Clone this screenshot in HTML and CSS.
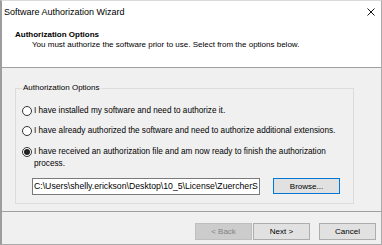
FILE: index.html
```html
<!DOCTYPE html>
<html lang="en">
  <head>
    <meta charset="UTF-8" />
    <title>Software Authorization Wizard</title>
    <link rel="stylesheet" href="styles.css">
  </head>
  <body>
    <div class="window">
      <!-- title bar -->
      <div class="titlebar">
        <span class="title">Software Authorization Wizard</span>
        <svg class="close" width="8" height="8" viewBox="0 0 8 8">
          <path d="M0.5 0.5 L7.5 7.5 M7.5 0.5 L0.5 7.5" stroke="#111" stroke-width="1" fill="none" />
        </svg>
      </div>

      <!-- wizard header -->
      <div class="header">
        <div class="header-title">Authorization Options</div>
        <div class="header-sub">You must authorize the software prior to use. Select from the options below.</div>
      </div>

      <!-- page body -->
      <div class="content">
        <fieldset class="group">
          <legend>Authorization Options</legend>
          <div class="option">
            <span class="radio"></span>
            <span class="option-text">I have installed my software and need to authorize it.</span>
          </div>
          <div class="option">
            <span class="radio"></span>
            <span class="option-text">I have already authorized the software and need to authorize additional extensions.</span>
          </div>
          <div class="option">
            <span class="radio checked"></span>
            <span class="option-text">I have received an authorization file and am now ready to finish the authorization process.</span>
          </div>
          <div class="file-row">
            <div class="path-field">C:\Users\shelly.erickson\Desktop\10_5\License\ZuercherS</div>
            <button class="button browse">Browse...</button>
          </div>
        </fieldset>
      </div>

      <!-- wizard buttons -->
      <div class="footer">
        <button class="button" disabled>&lt; Back</button>
        <button class="button next">Next &gt;</button>
        <button class="button cancel">Cancel</button>
      </div>
    </div>
  </body>
</html>
```

FILE: styles.css
```css
body {
  margin: 0;
  background-color: #ffffff;
}
.window {
  width: 382px;
  height: 245px;
  box-sizing: border-box;
  border-left: 2px solid #9d9d9d;
  border-right: 1px solid #aaaaaa;
  border-top: 1px solid #dadada;
  border-bottom: 1px solid #aaaaaa;
  display: flex;
  flex-direction: column;
  font-family: "Liberation Sans", Arial, sans-serif;
  font-size: 8px;
  color: #000000;
  background-color: #f0f0f0;
}
.titlebar {
  height: 21px;
  flex: none;
  display: flex;
  align-items: center;
  justify-content: space-between;
  padding: 0 6px 0 2px;
  background-color: #ffffff;
}
.title {
  font-size: 9px;
}
.close {
  display: block;
}
.header {
  flex: none;
  box-sizing: border-box;
  height: 46px;
  padding: 8px 0 0 13px;
  background-color: #ffffff;
  border-bottom: 1px solid #a0a0a0;
}
.header-title {
  font-weight: bold;
  line-height: 10px;
}
.header-sub {
  line-height: 10px;
  margin-left: 17px;
}

.content {
  height: 143px;
  flex: none;
  box-sizing: border-box;
  padding: 15px 27px 0 13px;
}
.group {
  margin: 0;
  padding: 12px 0 8px 6px;
  border: 1px solid #dcdcdc;
}
.group legend {
  padding: 0 1px;
  line-height: 10px;
}
.option {
  display: flex;
  align-items: flex-start;
  line-height: 12px;
  margin-bottom: 8px;
}
.option:nth-child(3) {
  margin-bottom: 9px;
}
.radio {
  width: 10px;
  height: 10px;
  box-sizing: border-box;
  border: 1px solid #333333;
  border-radius: 50%;
  background-color: #ffffff;
  margin: 1px 2px 0 0;
  flex: none;
  display: flex;
  align-items: center;
  justify-content: center;
}
.radio.checked::after {
  content: "";
  width: 6px;
  height: 6px;
  border-radius: 50%;
  background-color: #222222;
}
.option-text {
  font-size: 8.2px;
  max-width: 310px;
}
.file-row {
  display: flex;
  align-items: flex-start;
  padding-left: 10px;
  margin-top: 8px;
}
.path-field {
  width: 228px;
  height: 17px;
  box-sizing: border-box;
  border: 1px solid #7a7a7a;
  background-color: #ffffff;
  padding: 0 1px;
  font-size: 8.7px;
  line-height: 15px;
  white-space: nowrap;
  overflow: hidden;
}

.button {
  width: 57px;
  height: 17px;
  box-sizing: border-box;
  padding: 0;
  border: 1px solid #adadad;
  background-color: #e1e1e1;
  font-family: "Liberation Sans", Arial, sans-serif;
  font-size: 8px;
  color: #000000;
}
.button:disabled {
  background-color: #cccccc;
  border-color: #bfbfbf;
  color: #838383;
}
.browse {
  width: 67px;
  height: 16px;
  margin-left: 13px;
  border-color: #0078d7;
}

.footer {
  flex: 1;
  border-top: 1px solid #a0a0a0;
  display: flex;
  justify-content: flex-end;
  align-items: flex-start;
  padding: 11px 5px 0 0;
}
.next {
  margin-left: 1px;
}
.cancel {
  margin-left: 9px;
}
```
